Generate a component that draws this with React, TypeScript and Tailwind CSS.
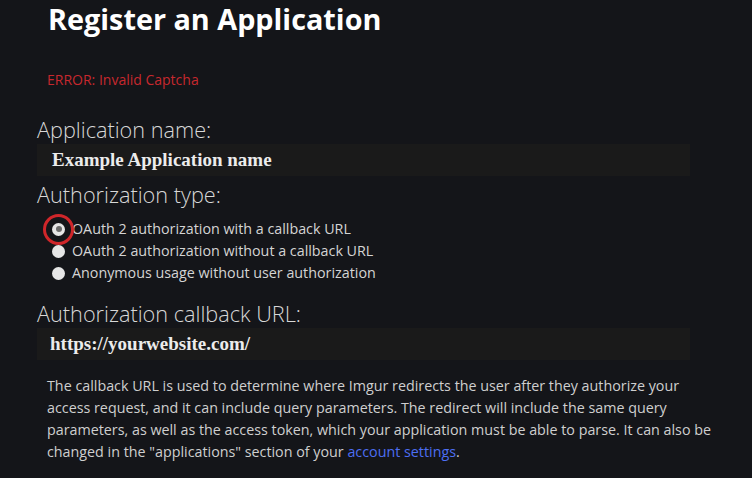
import React from "react";

function Radio({ checked, label, ring }: { checked?: boolean; label: string; ring?: boolean }) {
  return (
    <div className="flex items-center h-[22px]">
      <span className="relative w-[13px] h-[13px] ml-[15px] mr-[7px] flex items-center justify-center">
        <span className="w-[13px] h-[13px] rounded-full bg-[#e6e6e6] flex items-center justify-center">
          {checked && <span className="w-[6px] h-[6px] rounded-full bg-[#6b6b6b]" />}
        </span>
        {ring && (
          <span className="absolute left-[-9px] top-[-9px] w-[31px] h-[31px] rounded-full border-[3px] border-[#d0262a]" />
        )}
      </span>
      <span className="text-[14.3px] text-[#d4d4d4]">{label}</span>
    </div>
  );
}

export default function App() {
  return (
    <div
      className="w-[752px] h-[478px] bg-[#141519] overflow-hidden"
      style={{ fontFamily: '"Open Sans", sans-serif' }}
    >
      <div className="pl-[37px] pr-[27px]">
        <h1 className="pl-[11px] pt-[0px] text-[28.8px] font-bold text-white leading-[38px]">
          Register an Application
        </h1>
        <div className="pl-[10px] mt-[32px] text-[14px] text-[#c7282e] leading-[20px]">
          ERROR: Invalid Captcha
        </div>
        <div className="mt-[26px] text-[21.7px] font-light text-[#d8d8d8] leading-[28px]">
          Application name:
        </div>
        <div
          className="w-[653px] h-[32px] bg-[#1a1a1a] pl-[15px] flex items-center text-[19px] font-bold text-[#ececec]"
          style={{ fontFamily: '"Liberation Serif", serif' }}
        >
          Example Application name
        </div>
        <div className="mt-[5px] text-[21.7px] font-light text-[#d8d8d8] leading-[28px]">
          Authorization type:
        </div>
        <div className="mt-[9px]">
          <Radio checked ring label="OAuth 2 authorization with a callback URL" />
          <Radio label="OAuth 2 authorization without a callback URL" />
          <Radio label="Anonymous usage without user authorization" />
        </div>
        <div className="mt-[16px] text-[21.7px] font-light text-[#d8d8d8] leading-[28px]">
          Authorization callback URL:
        </div>
        <div
          className="w-[653px] h-[32px] bg-[#1a1a1a] pl-[13px] flex items-center text-[19px] font-bold text-[#ececec]"
          style={{ fontFamily: '"Liberation Serif", serif' }}
        >
          https://yourwebsite.com/
        </div>
        <p className="mt-[15px] pl-[10px] pr-[0px] text-[14.3px] leading-[22px] text-[#cfcfcf]">
          The callback URL is used to determine where Imgur redirects the user after they authorize your access
          request, and it can include query parameters. The redirect will include the same query parameters, as
          well as the access token, which your application must be able to parse. It can also be changed in the
          "applications" section of your <span className="text-[#4d6ef2]">account settings</span>.
        </p>
      </div>
    </div>
  );
}
